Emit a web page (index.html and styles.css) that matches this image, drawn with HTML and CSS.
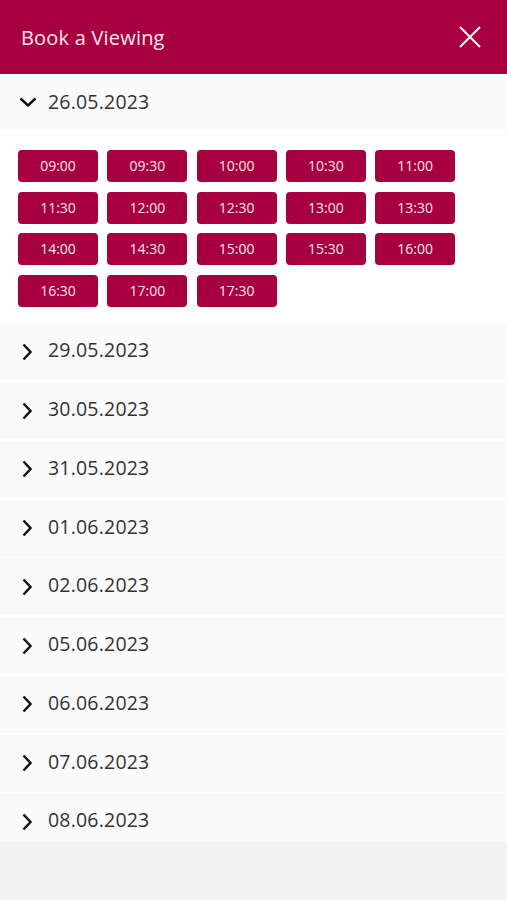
FILE: index.html
```html
<!DOCTYPE html>
<html lang="en">

<head>
    <meta charset="UTF-8">
    <meta name="viewport" content="width=device-width, initial-scale=1.0">
    <title>Book a Viewing</title>
    <link rel="stylesheet" href="styles.css">
</head>

<body>
    <div id="header">
        <span class="title">Book a Viewing</span>
        <svg class="close" width="22" height="22" viewBox="0 0 22 22">
            <path d="M1 1L21 21M21 1L1 21" stroke="#fff" stroke-width="2" fill="none"/>
        </svg>
    </div>
    <ul id="days">
        <li class="day open">
            <div class="day-head">
                <svg class="arrow" width="18" height="10" viewBox="0 0 18 10">
                    <path d="M1.5 1.5L9 8.5L16.5 1.5" stroke="#111" stroke-width="2.4" fill="none"/>
                </svg>
                <span>26.05.2023</span>
            </div>
            <div class="slots">
                <span>09:00</span>
                <span>09:30</span>
                <span>10:00</span>
                <span>10:30</span>
                <span>11:00</span>
                <span>11:30</span>
                <span>12:00</span>
                <span>12:30</span>
                <span>13:00</span>
                <span>13:30</span>
                <span>14:00</span>
                <span>14:30</span>
                <span>15:00</span>
                <span>15:30</span>
                <span>16:00</span>
                <span>16:30</span>
                <span>17:00</span>
                <span>17:30</span>
            </div>
        </li>
        <li class="day"><div class="day-head"><svg class="arrow" width="10" height="18" viewBox="0 0 10 18"><path d="M1.5 1.5L8.5 9L1.5 16.5" stroke="#111" stroke-width="2.4" fill="none"/></svg><span>29.05.2023</span></div></li>
        <li class="day"><div class="day-head"><svg class="arrow" width="10" height="18" viewBox="0 0 10 18"><path d="M1.5 1.5L8.5 9L1.5 16.5" stroke="#111" stroke-width="2.4" fill="none"/></svg><span>30.05.2023</span></div></li>
        <li class="day"><div class="day-head"><svg class="arrow" width="10" height="18" viewBox="0 0 10 18"><path d="M1.5 1.5L8.5 9L1.5 16.5" stroke="#111" stroke-width="2.4" fill="none"/></svg><span>31.05.2023</span></div></li>
        <li class="day"><div class="day-head"><svg class="arrow" width="10" height="18" viewBox="0 0 10 18"><path d="M1.5 1.5L8.5 9L1.5 16.5" stroke="#111" stroke-width="2.4" fill="none"/></svg><span>01.06.2023</span></div></li>
        <li class="day"><div class="day-head"><svg class="arrow" width="10" height="18" viewBox="0 0 10 18"><path d="M1.5 1.5L8.5 9L1.5 16.5" stroke="#111" stroke-width="2.4" fill="none"/></svg><span>02.06.2023</span></div></li>
        <li class="day"><div class="day-head"><svg class="arrow" width="10" height="18" viewBox="0 0 10 18"><path d="M1.5 1.5L8.5 9L1.5 16.5" stroke="#111" stroke-width="2.4" fill="none"/></svg><span>05.06.2023</span></div></li>
        <li class="day"><div class="day-head"><svg class="arrow" width="10" height="18" viewBox="0 0 10 18"><path d="M1.5 1.5L8.5 9L1.5 16.5" stroke="#111" stroke-width="2.4" fill="none"/></svg><span>06.06.2023</span></div></li>
        <li class="day"><div class="day-head"><svg class="arrow" width="10" height="18" viewBox="0 0 10 18"><path d="M1.5 1.5L8.5 9L1.5 16.5" stroke="#111" stroke-width="2.4" fill="none"/></svg><span>07.06.2023</span></div></li>
        <li class="day"><div class="day-head"><svg class="arrow" width="10" height="18" viewBox="0 0 10 18"><path d="M1.5 1.5L8.5 9L1.5 16.5" stroke="#111" stroke-width="2.4" fill="none"/></svg><span>08.06.2023</span></div></li>
    </ul>
</body>

</html>
```

FILE: styles.css
```css
* {
    margin: 0;
    padding: 0;
    box-sizing: border-box;
}

li {
    list-style: none;
}

body {
    background-color: #f2f2f2;
    font-family: "Open Sans", "Noto Sans", sans-serif;
    color: #333;
}

#header {
    height: 74px;
    background-color: #a6003f;
    display: flex;
    align-items: center;
    justify-content: space-between;
    padding: 0 26px 0 21px;
}

#header .title {
    color: #fce6ee;
    font-size: 20px;
    letter-spacing: 0.2px;
}

#header .close {
    display: block;
}

#days {
    height: 768px;
    overflow: hidden;
    background-color: #fff;
}

.day + .day {
    margin-top: 1.75px;
}

.day-head {
    height: 57px;
    background-color: #fafafa;
    display: flex;
    align-items: center;
    padding-bottom: 4px;
    font-size: 19.5px;
    letter-spacing: 0.2px;
    color: #333;
}

.day-head .arrow {
    margin-left: 22px;
    margin-right: 16px;
    margin-top: 4px;
    display: block;
}

.day.open .day-head {
    height: 56px;
    padding-bottom: 2px;
}

.day.open .day-head .arrow {
    margin-left: 19px;
    margin-right: 11px;
    margin-top: 2px;
}

.slots {
    background-color: #fff;
    padding: 20px 18px 15px;
    display: grid;
    grid-template-columns: repeat(5, 80px);
    column-gap: 9.3px;
    row-gap: 9.5px;
}

.slots span {
    height: 32px;
    line-height: 32px;
    text-align: center;
    background-color: #a6003f;
    color: #fbe4ec;
    font-size: 14px;
    border-radius: 4px;
}
```
